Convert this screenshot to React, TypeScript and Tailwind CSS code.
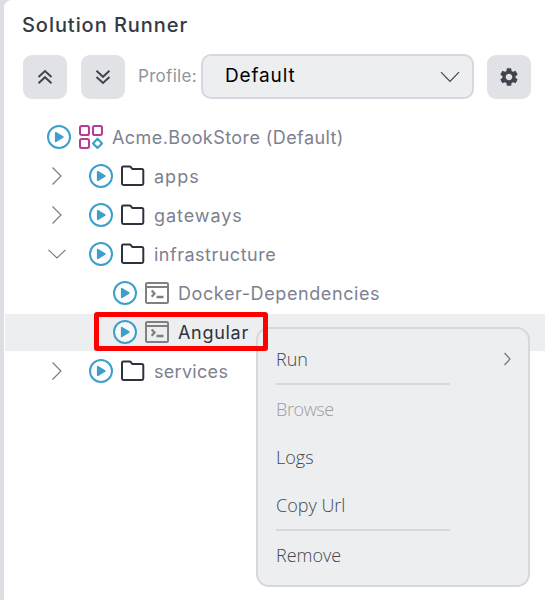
import type { ReactNode } from "react";
import { MdSettings } from "react-icons/md";

function Play() {
  return (
    <svg className="size-6 shrink-0" viewBox="0 0 24 24">
      <circle cx="12" cy="12" r="11" fill="#fff" fillOpacity="0.6" stroke="#3e9fcb" strokeWidth="2" />
      <path d="M8.8 7.7v8.6L15.8 12z" fill="#3e9fcb" stroke="#3e9fcb" strokeWidth="1.8" strokeLinejoin="round" />
    </svg>
  );
}

function Folder() {
  return (
    <svg className="h-[22px] w-6 shrink-0" viewBox="0 0 24 22" fill="none">
      <path
        d="M1 2.8Q1 1.5 2.3 1.5H8.6Q9.4 1.5 9.9 2.2L11.2 4H20.7Q22.3 4 22.3 5.5V18.6Q22.3 20 20.9 20H2.4Q1 20 1 18.6Z"
        stroke="#2d323c"
        strokeWidth="2"
        strokeLinejoin="round"
      />
    </svg>
  );
}

function Terminal() {
  return (
    <svg className="h-[22px] w-6 shrink-0" viewBox="0 0 24 22" fill="none" stroke="#808080" strokeWidth="2">
      <rect x="1" y="1" width="22" height="20" rx="1.2" />
      <path d="M1 5H23" strokeWidth="2" />
      <path d="M6.7 8.5 9.5 11.6 6.7 14.8M11.5 15H18.5" strokeWidth="2.3" />
    </svg>
  );
}

function Solution() {
  return (
    <svg className="size-6 shrink-0" viewBox="0 0 24 24" fill="none" stroke="#b83c93" strokeWidth="2.1">
      <rect x="1" y="1" width="9" height="9" rx="1.8" />
      <rect x="14" y="1" width="9" height="9" rx="1.8" />
      <rect x="1" y="14" width="9" height="9" rx="1.8" />
      <path d="M18.5 13.7 23 18.4 18.5 23.1 14 18.4Z" stroke="#3e9fcb" strokeLinejoin="round" />
    </svg>
  );
}

function Chevron({ open }: { open?: boolean }) {
  return (
    <svg className="size-5 shrink-0" viewBox="0 0 20 20" fill="none" stroke="#777" strokeWidth="1.1">
      <path d={open ? "M1.5 5.8 10 14 18.5 5.8" : "M5.5 1.5 14 10 5.5 18.5"} />
    </svg>
  );
}

function Row({ indent, icon, label, tracking, active }: {
  indent: string;
  icon: ReactNode;
  label: string;
  tracking: string;
  active?: boolean;
}) {
  return (
    <div className={`ml-px flex h-[37px] items-center pb-px ${indent} ${active ? "bg-[#edeef0] text-[#2f333b]" : "text-[#7c8190]"}`}>
      {icon}
      <span className={`ml-[9px] whitespace-nowrap ${tracking}`}>{label}</span>
    </div>
  );
}

function Branch({ label, tracking, open }: { label: string; tracking: string; open?: boolean }) {
  return (
    <Row
      indent="pl-[42px]"
      label={label}
      tracking={tracking}
      icon={
        <>
          <Chevron open={open} />
          <span className="ml-[22px] flex items-center gap-2">
            <Play />
            <Folder />
          </span>
        </>
      }
    />
  );
}

function Leaf({ label, tracking, active }: { label: string; tracking: string; active?: boolean }) {
  return (
    <Row
      indent="pl-[108px]"
      label={label}
      tracking={tracking}
      active={active}
      icon={
        <span className="flex items-center gap-2">
          <Play />
          <Terminal />
        </span>
      }
    />
  );
}

function ToolButton({ children }: { children: ReactNode }) {
  return (
    <button className="flex size-11 shrink-0 items-center justify-center rounded-[9px] bg-[#e1e2e6] text-[#40444e]">
      {children}
    </button>
  );
}

function MenuItem({ children, className = "" }: { children: ReactNode; className?: string }) {
  return <div className={`flex h-12 items-center justify-between pb-0.5 ${className}`}>{children}</div>;
}

const Separator = () => <div className="-mt-px mb-px h-0.5 w-[174px] bg-[#d7d8dc]" />;

export default function App() {
  return (
    <div className="relative h-[600px] w-[545px] overflow-hidden bg-[#dddee3] pl-1 font-['Inter',sans-serif] text-[18px]">
      <main className="h-full rounded-tl-[8px] bg-white">
        <h1 className="flex h-[54px] items-center pb-[5px] pl-[18px] text-[20px] font-medium tracking-[0.95px] text-[#343a43]">
          <span>Solution Runner</span>
        </h1>
        <div className="flex h-[45px] items-end pl-[19px]">
          <ToolButton>
            <svg className="size-5" viewBox="0 0 20 20" fill="none" stroke="currentColor" strokeWidth="2">
              <path d="M3.5 10 10 4 16.5 10M3.5 16.2 10 10.2 16.5 16.2" />
            </svg>
          </ToolButton>
          <div className="ml-3.5">
            <ToolButton>
              <svg className="size-5" viewBox="0 0 20 20" fill="none" stroke="currentColor" strokeWidth="2">
                <path d="M3.5 3.8 10 9.8 16.5 3.8M3.5 10 10 16 16.5 10" />
              </svg>
            </ToolButton>
          </div>
          <span className="ml-[13px] flex h-11 w-[63px] items-center whitespace-nowrap text-[17px] tracking-[0.3px] text-[#92959b]">Profile:</span>
          <div className="flex h-[45px] w-[273px] items-center justify-between rounded-[10px] border-2 border-[#d6d7df] bg-[#edeef0] pr-3 pl-[22px] text-[19px] text-black">
            <span className="pb-px tracking-[0.85px]">Default</span>
            <svg className="h-3 w-5" viewBox="0 0 20 12" fill="none" stroke="#444" strokeWidth="1.2">
              <path d="M1 1.2 10 10.5 19 1.2" />
            </svg>
          </div>
          <div className="ml-[13px]">
            <ToolButton>
              <MdSettings className="size-[22px]" />
            </ToolButton>
          </div>
        </div>
        <div className="flex flex-col gap-0.5 pt-5">
          <Row
            indent="pl-[42px]"
            label="Acme.BookStore (Default)"
            tracking="tracking-[0.42px]"
            icon={
              <span className="flex gap-2">
                <Play />
                <Solution />
              </span>
            }
          />
          <Branch label="apps" tracking="tracking-[1px]" />
          <Branch label="gateways" tracking="tracking-[0.95px]" />
          <Branch label="infrastructure" tracking="tracking-[0.5px]" open />
          <Leaf label="Docker-Dependencies" tracking="tracking-[0.6px]" />
          <Leaf label="Angular" tracking="tracking-[0.7px]" active />
          <Branch label="services" tracking="tracking-[0.3px]" />
        </div>
      </main>
      <div className="absolute top-[327px] left-[256px] h-[260px] w-[274px] rounded-[13px] border-2 border-[#d6d7df] bg-[#edeef0] px-[18px] pt-[7px] font-['Open_Sans',sans-serif] text-[18px] font-light text-[#43484f]">
        <MenuItem>
          <span>Run</span>
          <svg className="-mr-px h-[14px] w-2" viewBox="0 0 8 14" fill="none" stroke="#777" strokeWidth="1.2">
            <path d="M1.5 1 7 7 1.5 13" />
          </svg>
        </MenuItem>
        <Separator />
        <MenuItem className="tracking-[-0.4px] text-[#9a9ca1]">Browse</MenuItem>
        <MenuItem>Logs</MenuItem>
        <MenuItem>Copy Url</MenuItem>
        <Separator />
        <MenuItem>Remove</MenuItem>
      </div>
      <div className="absolute top-[312px] left-[94px] h-[39px] w-[174px] rounded-[3px] border-5 border-[#ff0000]" />
    </div>
  );
}
